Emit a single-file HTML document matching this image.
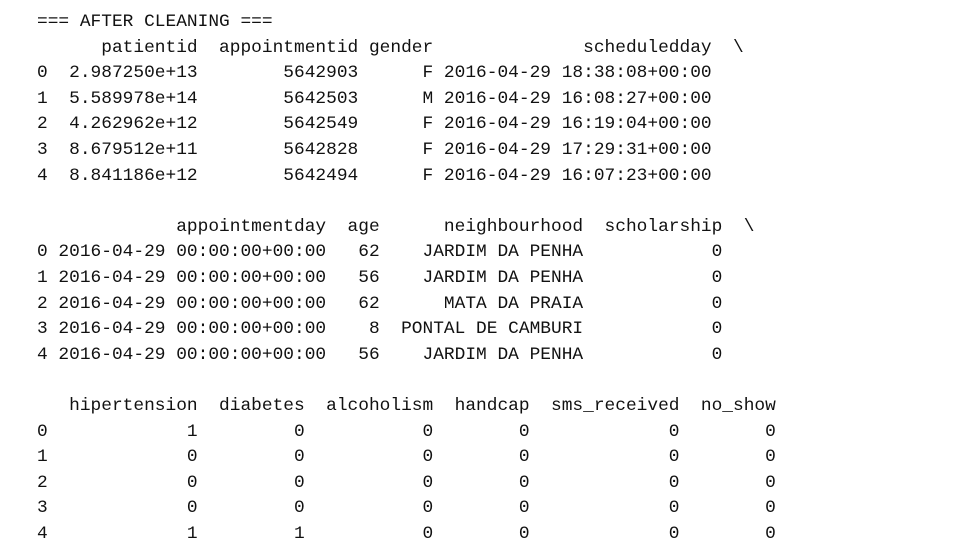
<!DOCTYPE html>
<html><head><style>
body{margin:0;background:#fff;width:962px;height:542px;overflow:hidden}
pre{position:absolute;left:37px;top:10px;margin:0;font-family:"Liberation Mono",monospace;font-size:17.85px;line-height:25.6px;color:#111}
</style></head><body><pre>=== AFTER CLEANING ===
      patientid  appointmentid gender              scheduledday  \
0  2.987250e+13        5642903      F 2016-04-29 18:38:08+00:00
1  5.589978e+14        5642503      M 2016-04-29 16:08:27+00:00
2  4.262962e+12        5642549      F 2016-04-29 16:19:04+00:00
3  8.679512e+11        5642828      F 2016-04-29 17:29:31+00:00
4  8.841186e+12        5642494      F 2016-04-29 16:07:23+00:00

             appointmentday  age      neighbourhood  scholarship  \
0 2016-04-29 00:00:00+00:00   62    JARDIM DA PENHA            0
1 2016-04-29 00:00:00+00:00   56    JARDIM DA PENHA            0
2 2016-04-29 00:00:00+00:00   62      MATA DA PRAIA            0
3 2016-04-29 00:00:00+00:00    8  PONTAL DE CAMBURI            0
4 2016-04-29 00:00:00+00:00   56    JARDIM DA PENHA            0

   hipertension  diabetes  alcoholism  handcap  sms_received  no_show
0             1         0           0        0             0        0
1             0         0           0        0             0        0
2             0         0           0        0             0        0
3             0         0           0        0             0        0
4             1         1           0        0             0        0</pre></body></html>
